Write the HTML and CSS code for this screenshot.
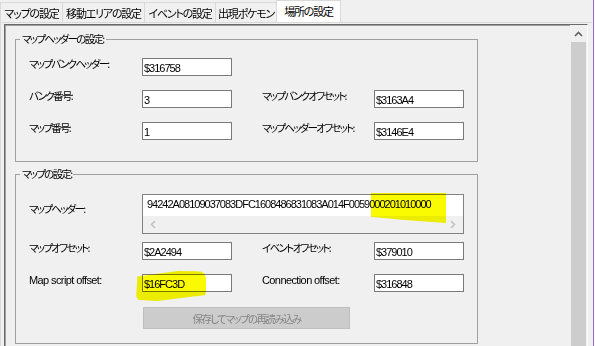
FILE: index.html
```html
<!DOCTYPE html>
<html lang="ja">
<head>
<meta charset="utf-8">
<link rel="stylesheet" href="styles.css">
</head>
<body>
<div class="window">
  <div class="tabctl">
    <div class="tabs">
      <div class="tab t1 jp">マップの設定</div>
      <div class="tab t2 jp">移動エリアの設定</div>
      <div class="tab t3 jp">イベントの設定</div>
      <div class="tab t4 jp">出現ポケモン</div>
      <div class="tab active jp">場所の設定</div>
    </div>
    <div class="page">
      <div class="panel">
        <div class="content">
          <div class="group g1">
            <div class="group-title jp">マップヘッダーの設定:</div>
            <div class="grid">
              <div class="lbl jp newrow">マップバンクヘッダー:</div>
              <div class="field">$316758</div>
              <div class="lbl jp newrow">バンク番号:</div>
              <div class="field">3</div>
              <div class="lbl jp">マップバンクオフセット:</div>
              <div class="field">$3163A4</div>
              <div class="lbl jp newrow">マップ番号:</div>
              <div class="field">1</div>
              <div class="lbl jp">マップヘッダーオフセット:</div>
              <div class="field">$3146E4</div>
            </div>
          </div>
          <div class="group g2">
            <div class="group-title jp">マップの設定:</div>
            <div class="hdr-row">
              <div class="lbl jp memo-lbl">マップヘッダー:</div>
              <div class="memo">
                <div class="memo-text">94242A08109037083DFC1608486831083A014F0059000201010000</div>
                <div class="hscroll">
                  <svg class="sarrow" width="6" height="9" viewBox="0 0 6 9"><polyline points="5,1 1.5,4.5 5,8" fill="none" stroke="#c2c2c2" stroke-width="1.6"/></svg>
                  <svg class="sarrow" width="6" height="9" viewBox="0 0 6 9"><polyline points="1,1 4.5,4.5 1,8" fill="none" stroke="#c2c2c2" stroke-width="1.6"/></svg>
                </div>
              </div>
            </div>
            <div class="grid">
              <div class="lbl jp newrow">マップオフセット:</div>
              <div class="field">$2A2494</div>
              <div class="lbl jp">イベントオフセット:</div>
              <div class="field">$379010</div>
              <div class="lbl en newrow">Map script offset:</div>
              <div class="field">$16FC3D</div>
              <div class="lbl en">Connection offset:</div>
              <div class="field">$316848</div>
            </div>
            <div class="btn-row">
              <div class="btn jp">保存してマップの再読み込み</div>
            </div>
            <div class="mark mark-a"></div>
            <div class="mark mark-b"></div>
          </div>
        </div>
        <div class="vscroll">
          <div class="vbtn">
            <svg width="9" height="6" viewBox="0 0 9 6"><polyline points="1,5 4.5,1.5 8,5" fill="none" stroke="#606060" stroke-width="1.6"/></svg>
          </div>
          <div class="thumb"></div>
        </div>
      </div>
    </div>
  </div>
  <div class="rightedge"></div>
</div>
</body>
</html>
```
FILE: styles.css
```css
html, body {
  margin: 0;
  padding: 0;
}
body {
  width: 595px;
  height: 346px;
  overflow: hidden;
  background: #f0f0f0;
  font-family: "Liberation Sans", "Noto Sans CJK JP", sans-serif;
  font-size: 11px;
  color: #000;
}
.jp {
  font-family: "Noto Sans CJK JP", sans-serif;
  font-feature-settings: "palt";
  font-size: 11px;
  letter-spacing: -1.2px;
}
.en {
  letter-spacing: -0.6px;
}
.window {
  display: flex;
  height: 346px;
}
.tabctl {
  width: 592px;
  display: flex;
  flex-direction: column;
}
.tabs {
  display: flex;
  align-items: flex-end;
  height: 22px;
}
.tab {
  box-sizing: border-box;
  height: 20px;
  border: 1px solid #d9d9d9;
  border-bottom: none;
  margin-right: -1px;
  background: #f0f0f0;
  display: flex;
  align-items: center;
  justify-content: center;
  line-height: 14px;
  white-space: nowrap;
}
.t1 { width: 63px; }
.t2 { width: 83px; }
.t3 { width: 72px; }
.t4 { width: 62px; }
.tab.active {
  width: 65px;
  height: 22px;
  background: #fff;
  position: relative;
  z-index: 1;
  padding-bottom: 1px;
}
.page {
  flex: 1;
  border-top: 1px solid #d9d9d9;
  border-left: 1px solid #d9d9d9;
  padding: 1px 0 0 3px;
  display: flex;
  flex-direction: column;
}
.panel {
  flex: 1;
  width: 584px;
  box-sizing: border-box;
  border-top: 1px solid #696969;
  border-left: 1px solid #696969;
  border-right: 1px solid #fcfcfc;
  box-shadow: inset 1px 1px 0 #a0a0a0;
  display: flex;
}
.content {
  flex: 1;
  padding: 14px 0 0 10px;
}
.group {
  position: relative;
  width: 463px;
  box-sizing: border-box;
  border: 1px solid #a0a0a0;
}
.g1 {
  padding: 18px 0 21px 13px;
}
.g2 {
  margin-top: 12px;
  padding: 19px 0 14px 13px;
}
.group-title {
  position: absolute;
  top: -8px;
  left: 4px;
  padding: 0 2px;
  line-height: 14px;
  background: #f0f0f0;
  white-space: nowrap;
  font-size: 10.5px;
  letter-spacing: -1.7px;
}
.grid {
  display: grid;
  grid-template-columns: 113px 120px 112px 90px;
  grid-auto-rows: 18px;
  row-gap: 14px;
}
.newrow {
  grid-column: 1;
}
.lbl {
  align-self: start;
  line-height: 13px;
  white-space: nowrap;
}
.lbl.jp {
  font-size: 10.5px;
  letter-spacing: -1.7px;
  margin-top: -1px;
}
.field {
  width: 90px;
  height: 18px;
  box-sizing: border-box;
  border: 1px solid #7a7a7a;
  background: #fff;
  padding: 1px 0 0 1px;
  display: flex;
  align-items: center;
  letter-spacing: -1px;
}
.hdr-row {
  display: grid;
  grid-template-columns: 113px 322px;
  margin-bottom: 8px;
}
.lbl.memo-lbl {
  margin-top: 0;
  padding-top: 8px;
}
.memo {
  height: 40px;
  box-sizing: border-box;
  border: 1px solid #828282;
  background: #fff;
  display: flex;
  flex-direction: column;
}
.memo-text {
  flex: 1;
  padding: 2px 0 0 4px;
  line-height: 14px;
  white-space: nowrap;
  overflow: hidden;
  letter-spacing: -1px;
}
.hscroll {
  height: 17px;
  background: #f0f0f0;
  display: flex;
  justify-content: space-between;
  align-items: center;
  padding: 0 7px 0 7px;
}
.btn-row {
  margin-top: 15px;
  padding-left: 114px;
}
.btn {
  width: 207px;
  height: 22px;
  box-sizing: border-box;
  border: 1px solid #bfbfbf;
  background: #cccccc;
  color: #858585;
  display: flex;
  align-items: center;
  justify-content: center;
  font-size: 10.5px;
  letter-spacing: -1.6px;
}
.mark {
  position: absolute;
  background: #fbfb00;
  mix-blend-mode: multiply;
}
.mark-a {
  left: 120px;
  top: 96px;
  width: 70px;
  height: 30px;
  border-radius: 3px 8px 10px 6px;
  clip-path: polygon(2% 18%, 60% 0, 100% 2%, 100% 80%, 70% 88%, 30% 100%, 0 96%);
}
.mark-b {
  left: 355px;
  top: 18px;
  width: 75px;
  height: 30px;
  clip-path: polygon(0 0, 100% 0, 100% 100%, 45% 90%, 10% 82%, 0 80%);
}
.vscroll {
  width: 17px;
  box-sizing: border-box;
  padding: 0 1px;
  background: #f0f0f0;
  display: flex;
  flex-direction: column;
}
.vbtn {
  height: 17px;
  display: flex;
  align-items: center;
  justify-content: center;
}
.thumb {
  flex: 1;
  background: #cdcdcd;
}
.rightedge {
  margin-left: 1px;
  width: 1px;
  background: #9a66d8;
  border-right: 1px solid #fff;
}
```
